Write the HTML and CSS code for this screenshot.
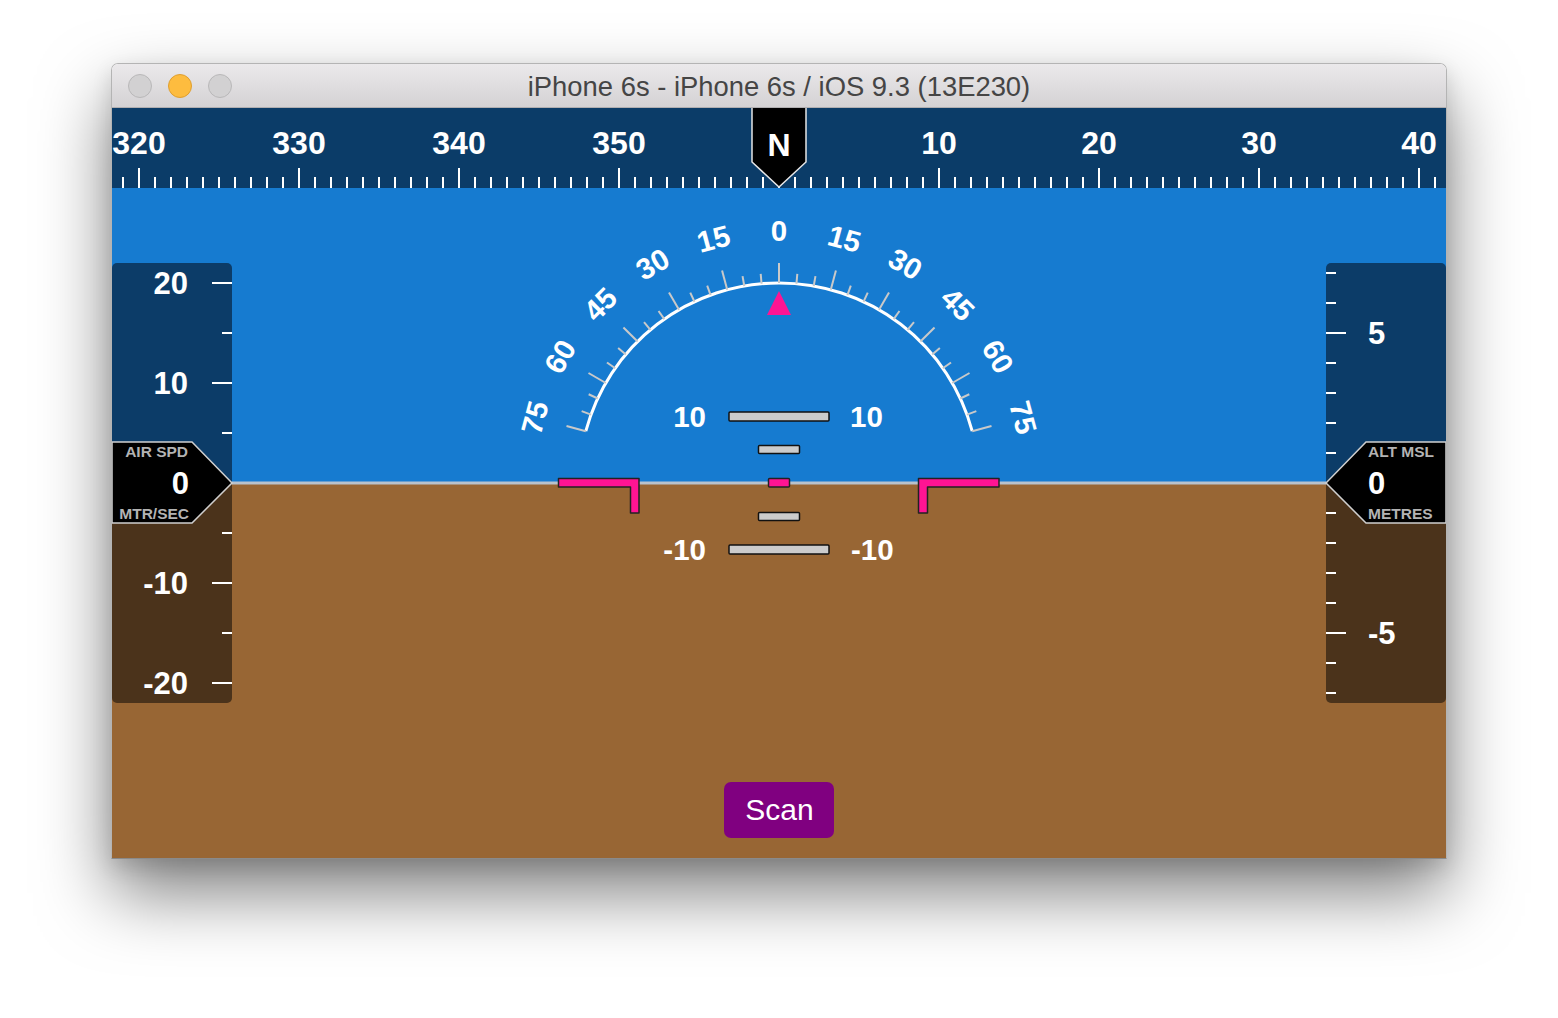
FILE: index.html
```html
<!DOCTYPE html>
<html lang="en">
<head>
<meta charset="utf-8">
<title>iPhone 6s - iPhone 6s / iOS 9.3 (13E230)</title>
<link rel="stylesheet" href="styles.css">
</head>
<body>
<div class="window">
  <div class="titlebar">
    <div class="lights">
      <span class="light light-gray"></span>
      <span class="light light-yellow"></span>
      <span class="light light-gray"></span>
    </div>
    <div class="title">iPhone 6s - iPhone 6s / iOS 9.3 (13E230)</div>
    <div></div>
  </div>
  <div class="screen">
    <div class="heading">
      <svg class="heading-svg" width="1334" height="80" viewBox="0 0 1334 80">
        <defs>
          <pattern id="hp" x="0" y="0" width="16" height="80" patternUnits="userSpaceOnUse">
            <rect x="10" y="69" width="2" height="11" fill="#ffffff"/>
          </pattern>
        </defs>
        <rect x="0" y="0" width="1334" height="80" fill="url(#hp)"/>
        <g fill="#ffffff">
          <rect x="26" y="60" width="2" height="20"/>
          <rect x="186" y="60" width="2" height="20"/>
          <rect x="346" y="60" width="2" height="20"/>
          <rect x="506" y="60" width="2" height="20"/>
          <rect x="826" y="60" width="2" height="20"/>
          <rect x="986" y="60" width="2" height="20"/>
          <rect x="1146" y="60" width="2" height="20"/>
          <rect x="1306" y="60" width="2" height="20"/>
        </g>
        <g class="hd-label" text-anchor="middle">
          <text x="27" y="35">320</text>
          <text x="187" y="35">330</text>
          <text x="347" y="35">340</text>
          <text x="507" y="35">350</text>
          <text x="827" y="35">10</text>
          <text x="987" y="35">20</text>
          <text x="1147" y="35">30</text>
          <text x="1307" y="35">40</text>
        </g>
        <polygon points="640,-2 694,-2 694,54 667,79 640,54" fill="#000" stroke="#e6e6e6" stroke-width="1.5"/>
        <text class="hd-label" x="667" y="37" text-anchor="middle">N</text>
      </svg>
    </div>
    <div class="sky"></div>
    <div class="ground">
      <button class="scan">Scan</button>
    </div>

    <svg class="overlay" width="1334" height="750" viewBox="0 0 1334 750">
      <defs>
        <line id="tM" x1="667" y1="175" x2="667" y2="155"/>
        <line id="tm" x1="667" y1="175" x2="667" y2="165"/>
        <clipPath id="lclip"><rect x="0" y="155" width="120" height="440" rx="5"/></clipPath>
        <clipPath id="rclip"><rect x="1214" y="155" width="120" height="440" rx="5"/></clipPath>
      </defs>

      <!-- horizon -->
      <rect x="0" y="373.5" width="1334" height="3" fill="#b9c2cc"/>

      <!-- roll scale -->
      <path d="M 473.8 323.2 A 200 200 0 0 1 860.2 323.2" fill="none" stroke="#ffffff" stroke-width="3"/>
      <g stroke="#c9c9c9" stroke-width="2">
        <use href="#tM" transform="rotate(-75 667 375)"/>
        <use href="#tm" transform="rotate(-70 667 375)"/>
        <use href="#tm" transform="rotate(-65 667 375)"/>
        <use href="#tM" transform="rotate(-60 667 375)"/>
        <use href="#tm" transform="rotate(-55 667 375)"/>
        <use href="#tm" transform="rotate(-50 667 375)"/>
        <use href="#tM" transform="rotate(-45 667 375)"/>
        <use href="#tm" transform="rotate(-40 667 375)"/>
        <use href="#tm" transform="rotate(-35 667 375)"/>
        <use href="#tM" transform="rotate(-30 667 375)"/>
        <use href="#tm" transform="rotate(-25 667 375)"/>
        <use href="#tm" transform="rotate(-20 667 375)"/>
        <use href="#tM" transform="rotate(-15 667 375)"/>
        <use href="#tm" transform="rotate(-10 667 375)"/>
        <use href="#tm" transform="rotate(-5 667 375)"/>
        <use href="#tM"/>
        <use href="#tm" transform="rotate(5 667 375)"/>
        <use href="#tm" transform="rotate(10 667 375)"/>
        <use href="#tM" transform="rotate(15 667 375)"/>
        <use href="#tm" transform="rotate(20 667 375)"/>
        <use href="#tm" transform="rotate(25 667 375)"/>
        <use href="#tM" transform="rotate(30 667 375)"/>
        <use href="#tm" transform="rotate(35 667 375)"/>
        <use href="#tm" transform="rotate(40 667 375)"/>
        <use href="#tM" transform="rotate(45 667 375)"/>
        <use href="#tm" transform="rotate(50 667 375)"/>
        <use href="#tm" transform="rotate(55 667 375)"/>
        <use href="#tM" transform="rotate(60 667 375)"/>
        <use href="#tm" transform="rotate(65 667 375)"/>
        <use href="#tm" transform="rotate(70 667 375)"/>
        <use href="#tM" transform="rotate(75 667 375)"/>
      </g>
      <g class="roll-label" text-anchor="middle">
        <text x="667" y="122" transform="rotate(-75 667 375)">75</text>
        <text x="667" y="122" transform="rotate(-60 667 375)">60</text>
        <text x="667" y="122" transform="rotate(-45 667 375)">45</text>
        <text x="667" y="122" transform="rotate(-30 667 375)">30</text>
        <text x="667" y="122" transform="rotate(-15 667 375)">15</text>
        <text x="667" y="122">0</text>
        <text x="667" y="122" transform="rotate(15 667 375)">15</text>
        <text x="667" y="122" transform="rotate(30 667 375)">30</text>
        <text x="667" y="122" transform="rotate(45 667 375)">45</text>
        <text x="667" y="122" transform="rotate(60 667 375)">60</text>
        <text x="667" y="122" transform="rotate(75 667 375)">75</text>
      </g>
      <polygon points="667,183 655,207 679,207" fill="#ff1493"/>

      <!-- pitch ladder -->
      <g fill="#cccccc" stroke="#111111" stroke-width="1.5">
        <rect x="617" y="304" width="100" height="9" rx="1"/>
        <rect x="646.5" y="337.5" width="41" height="8" rx="1"/>
        <rect x="646.5" y="404.5" width="41" height="8" rx="1"/>
        <rect x="617" y="437" width="100" height="9" rx="1"/>
      </g>
      <g class="pitch-label">
        <text x="594" y="308" text-anchor="end">10</text>
        <text x="738" y="308" text-anchor="start">10</text>
        <text x="594" y="441" text-anchor="end">-10</text>
        <text x="739" y="441" text-anchor="start">-10</text>
      </g>

      <!-- aircraft symbol -->
      <g fill="#ff1493" stroke="#222222" stroke-width="1.5" stroke-linejoin="round">
        <polygon points="446.5,370.5 527,370.5 527,405 518.5,405 518.5,379 446.5,379"/>
        <polygon points="806.5,370.5 887,370.5 887,379 815.5,379 815.5,405 806.5,405"/>
        <rect x="656.5" y="370.5" width="21" height="8.5" rx="1"/>
      </g>

      <!-- air speed tape -->
      <g clip-path="url(#lclip)">
        <rect x="0" y="155" width="120" height="220" fill="#0c3c68"/>
        <rect x="0" y="375" width="120" height="220" fill="#4b331b"/>
      </g>
      <g stroke="#ffffff" stroke-width="2">
        <line x1="100" y1="175" x2="120" y2="175"/>
        <line x1="110" y1="225" x2="120" y2="225"/>
        <line x1="100" y1="275" x2="120" y2="275"/>
        <line x1="110" y1="325" x2="120" y2="325"/>
        <line x1="110" y1="425" x2="120" y2="425"/>
        <line x1="100" y1="475" x2="120" y2="475"/>
        <line x1="110" y1="525" x2="120" y2="525"/>
        <line x1="100" y1="575" x2="120" y2="575"/>
      </g>
      <g class="tape-label" text-anchor="end">
        <text x="76" y="175">20</text>
        <text x="76" y="275">10</text>
        <text x="76" y="475">-10</text>
        <text x="76" y="575">-20</text>
      </g>
      <polygon points="0,334 80,334 120,375 80,415 0,415" fill="#000" stroke="#d0d0d0" stroke-width="1.5"/>
      <text class="box-cap" x="76" y="343" text-anchor="end">AIR SPD</text>
      <text class="box-val" x="77" y="375" text-anchor="end">0</text>
      <text class="box-cap" x="77" y="405" text-anchor="end">MTR/SEC</text>

      <!-- altitude tape -->
      <g clip-path="url(#rclip)">
        <rect x="1214" y="155" width="120" height="220" fill="#0c3c68"/>
        <rect x="1214" y="375" width="120" height="220" fill="#4b331b"/>
      </g>
      <g stroke="#ffffff" stroke-width="2">
        <line x1="1214" y1="165" x2="1224" y2="165"/>
        <line x1="1214" y1="195" x2="1224" y2="195"/>
        <line x1="1214" y1="225" x2="1234" y2="225"/>
        <line x1="1214" y1="255" x2="1224" y2="255"/>
        <line x1="1214" y1="285" x2="1224" y2="285"/>
        <line x1="1214" y1="315" x2="1224" y2="315"/>
        <line x1="1214" y1="345" x2="1224" y2="345"/>
        <line x1="1214" y1="405" x2="1224" y2="405"/>
        <line x1="1214" y1="435" x2="1224" y2="435"/>
        <line x1="1214" y1="465" x2="1224" y2="465"/>
        <line x1="1214" y1="495" x2="1224" y2="495"/>
        <line x1="1214" y1="525" x2="1234" y2="525"/>
        <line x1="1214" y1="555" x2="1224" y2="555"/>
        <line x1="1214" y1="585" x2="1224" y2="585"/>
      </g>
      <g class="tape-label" text-anchor="start">
        <text x="1256" y="225">5</text>
        <text x="1256" y="525">-5</text>
      </g>
      <polygon points="1214,375 1254,334 1334,334 1334,415 1254,415" fill="#000" stroke="#d0d0d0" stroke-width="1.5"/>
      <text class="box-cap" x="1256" y="343">ALT MSL</text>
      <text class="box-val" x="1256" y="375">0</text>
      <text class="box-cap" x="1256" y="405">METRES</text>
    </svg>
  </div>
</div>
</body>
</html>
```

FILE: styles.css
```css
html, body {
  margin: 0;
  padding: 0;
  background: #ffffff;
}

body {
  font-family: "Liberation Sans", Arial, sans-serif;
  width: 1558px;
  height: 1018px;
  overflow: hidden;
}

.window {
  margin: 63px 0 0 111px;
  width: 1334px;
  border: 1px solid #b4b4b4;
  border-bottom-color: #8a8a8a;
  border-radius: 7px 7px 0 0;
  overflow: hidden;
  box-shadow: 0 34px 70px rgba(0, 0, 0, 0.5), 0 8px 20px rgba(0, 0, 0, 0.12);
}

.titlebar {
  height: 43px;
  border-bottom: 1px solid #b1afb1;
  background: linear-gradient(#ebe9eb, #d4d2d4);
  display: grid;
  grid-template-columns: 1fr auto 1fr;
  align-items: center;
}

.lights {
  display: flex;
  gap: 16px;
  padding-left: 16px;
  padding-top: 1px;
}

.light {
  width: 22px;
  height: 22px;
  border-radius: 50%;
  border: 1px solid #b9b8b9;
  background: #d2d1d2;
}

.light-yellow {
  background: #fdbc3f;
  border-color: #df9f30;
}

.title {
  font-size: 27.4px;
  color: #454545;
  white-space: nowrap;
  padding-top: 3px;
}

.screen {
  position: relative;
  height: 750px;
  display: flex;
  flex-direction: column;
}

.heading {
  height: 80px;
  background: #0b3c68;
}

.heading-svg {
  display: block;
}

.sky {
  height: 295px;
  background: #167bd0;
}

.ground {
  flex: 1;
  background: #986634;
  display: flex;
  align-items: flex-end;
  justify-content: center;
  padding-bottom: 20px;
}

.scan {
  width: 110px;
  height: 56px;
  border: none;
  border-radius: 7px;
  background: #800080;
  color: #ffffff;
  font-family: "Liberation Sans", Arial, sans-serif;
  font-size: 30px;
  padding: 0 0 0 1px;
}

.overlay {
  position: absolute;
  left: 0;
  top: 0;
  pointer-events: none;
}

.hd-label {
  font-family: "Liberation Sans", Arial, sans-serif;
  font-weight: bold;
  font-size: 32px;
  fill: #ffffff;
  dominant-baseline: central;
}

.hd-label text {
  dominant-baseline: central;
}

.roll-label text,
.pitch-label text {
  font-family: "Liberation Sans", Arial, sans-serif;
  font-weight: bold;
  font-size: 29.5px;
  fill: #ffffff;
  dominant-baseline: central;
}

.tape-label text {
  font-family: "Liberation Sans", Arial, sans-serif;
  font-weight: bold;
  font-size: 31px;
  fill: #ffffff;
  dominant-baseline: central;
}

.box-cap {
  font-family: "Liberation Sans", Arial, sans-serif;
  font-weight: bold;
  font-size: 15.5px;
  fill: #b3b3b3;
  dominant-baseline: central;
}

.box-val {
  font-family: "Liberation Sans", Arial, sans-serif;
  font-weight: bold;
  font-size: 31px;
  fill: #ffffff;
  dominant-baseline: central;
}
```
